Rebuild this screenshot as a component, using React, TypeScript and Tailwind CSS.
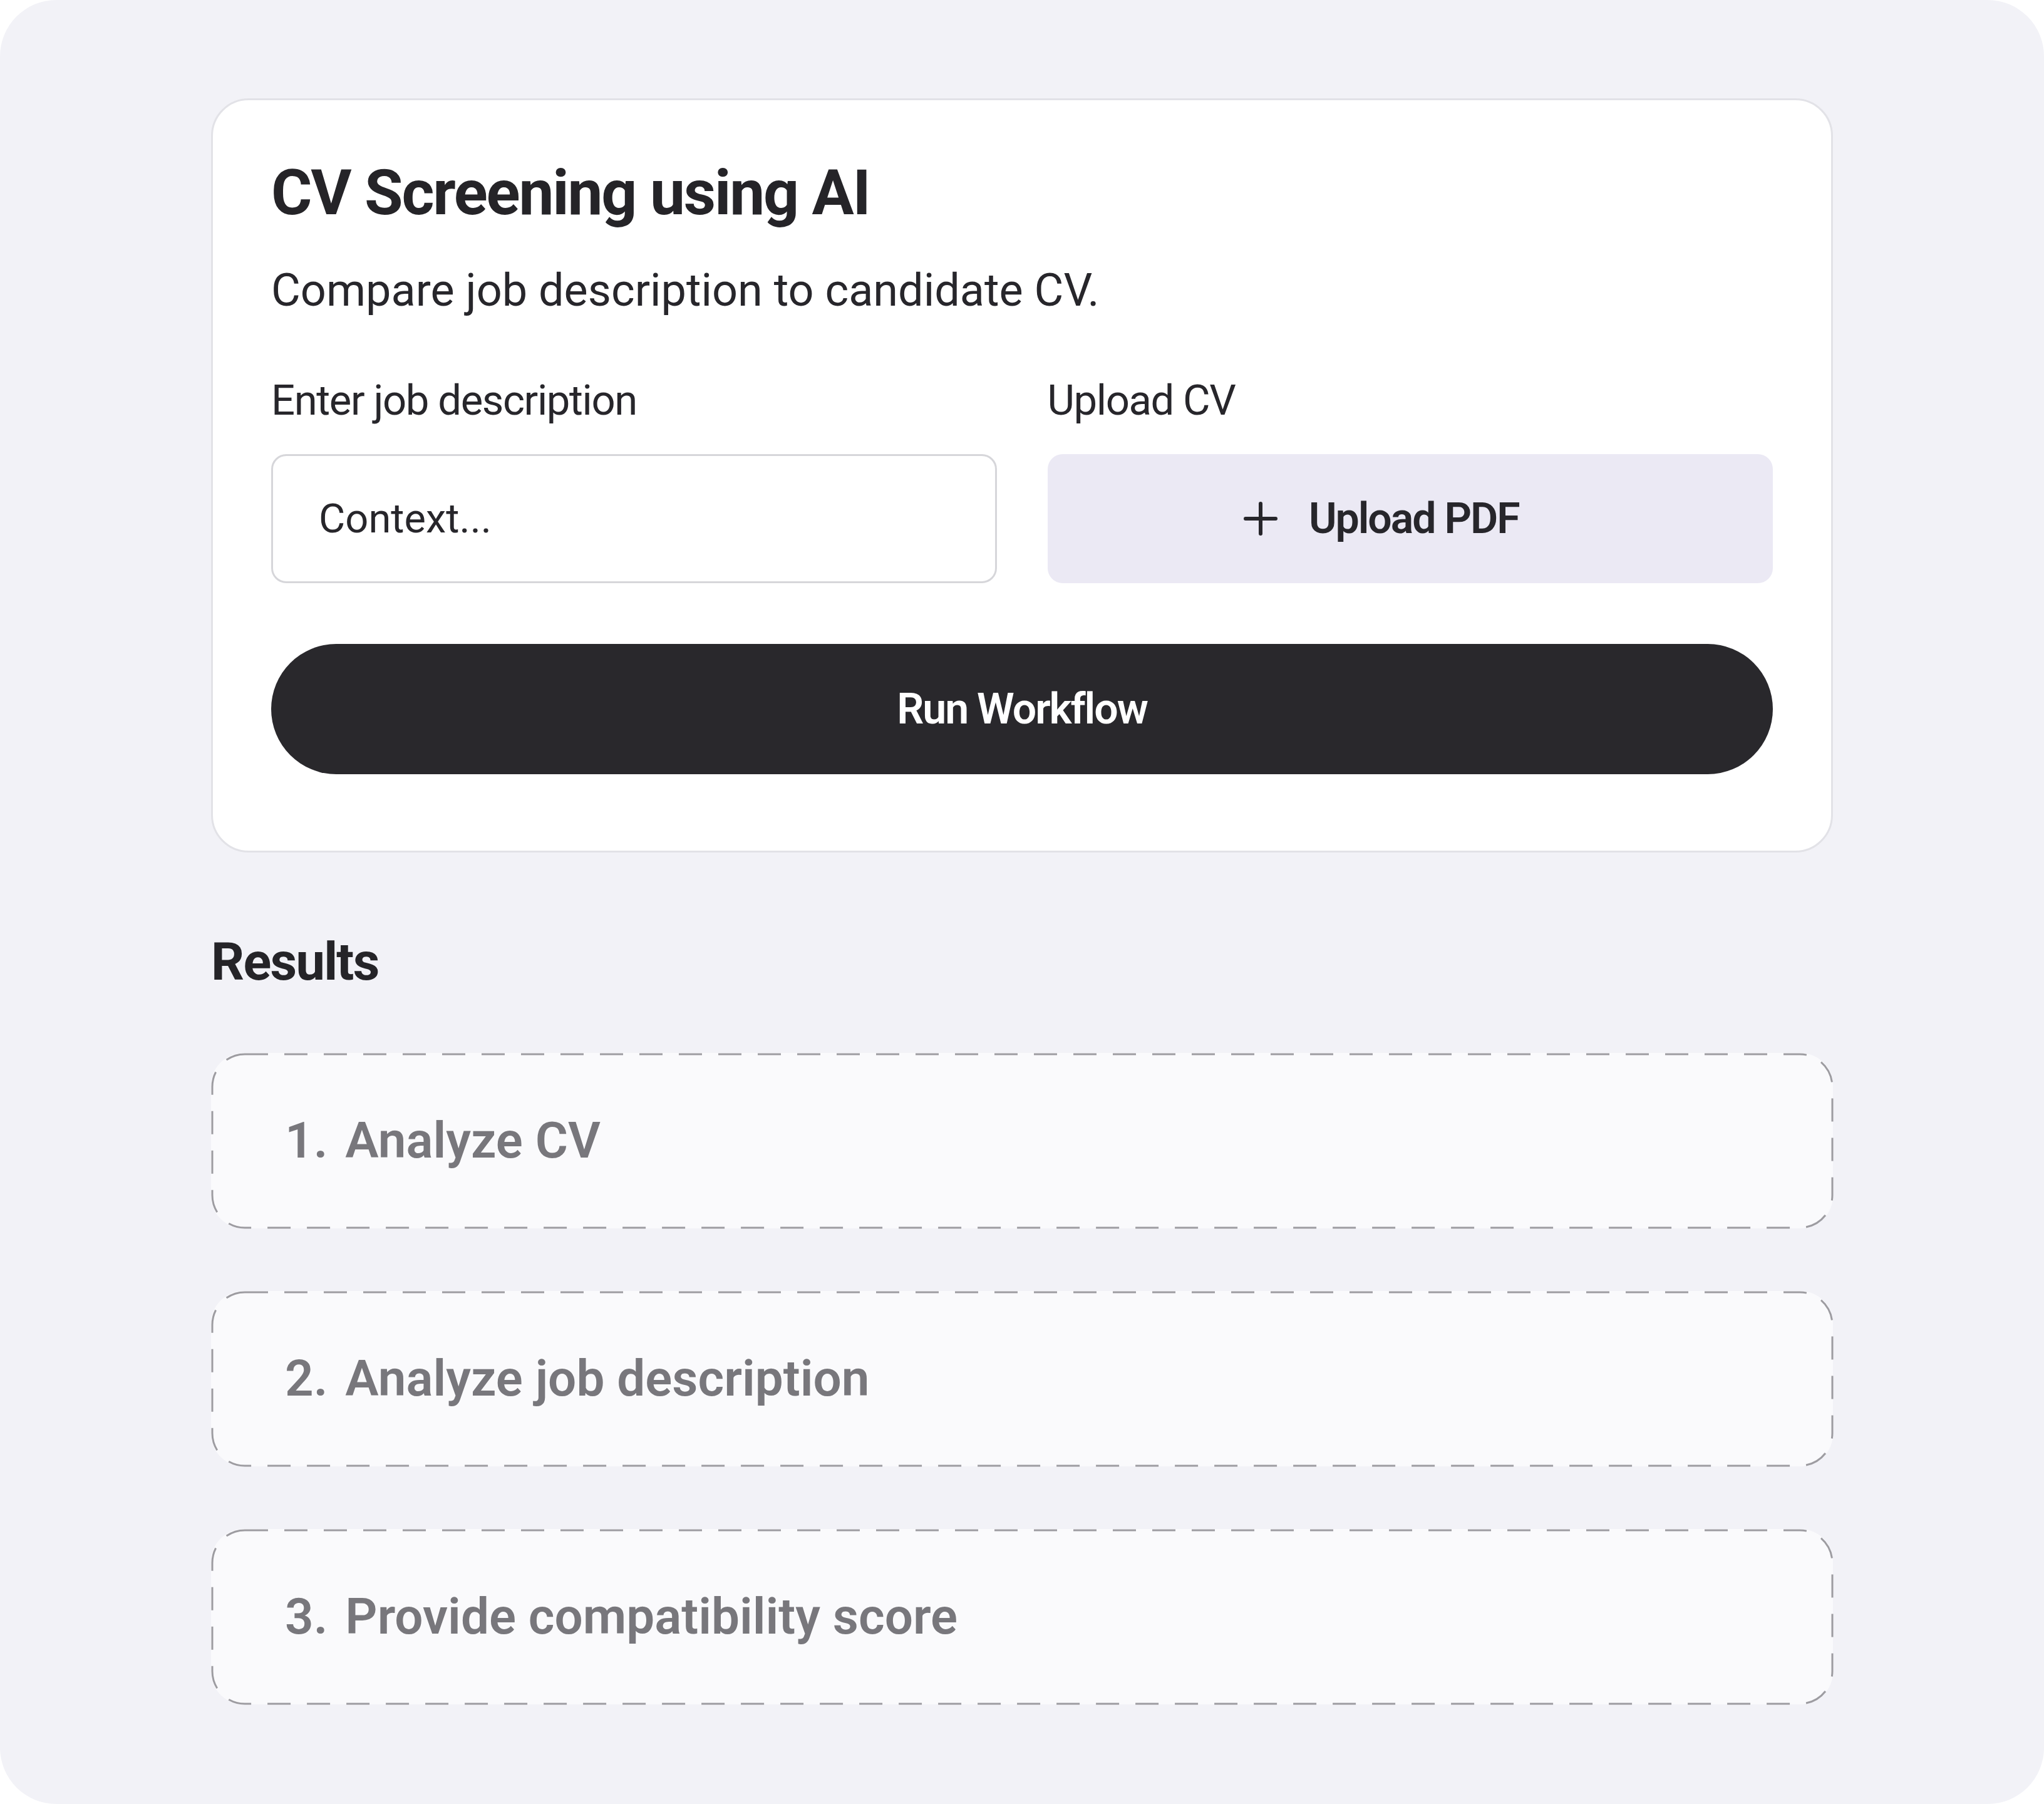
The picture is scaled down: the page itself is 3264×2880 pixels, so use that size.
import { useState } from "react";

const steps = ["Analyze CV", "Analyze job description", "Provide compatibility score"];

function PlusIcon() {
  return (
    <svg width="54" height="54" viewBox="0 0 54 54" fill="none">
      <path
        d="M3 27h48M27 3v48"
        stroke="#27262b"
        strokeWidth="6"
        strokeLinecap="round"
      />
    </svg>
  );
}

function StepCard({ index, label }: { index: number; label: string }) {
  return (
    <div className="relative flex h-[280px] items-center rounded-[52px] bg-[#fafafc] pl-[118px]">
      <svg className="pointer-events-none absolute inset-[1.5px] h-[calc(100%-3px)] w-[calc(100%-3px)] overflow-visible">
        <rect
          width="100%"
          height="100%"
          rx="52"
          fill="none"
          stroke="#9d9ca1"
          strokeWidth="3"
          strokeDasharray="37 26"
        />
      </svg>
      <span className="text-[80px] font-semibold leading-[96px] text-[#78777c]">
        <span className="mr-[8px]">{index}.</span> {label}
      </span>
    </div>
  );
}

export default function App() {
  const [context, setContext] = useState("");

  return (
    <div className="h-[2880px] w-[3264px] bg-white font-[Roboto,sans-serif] text-[#27262b]">
      <div className="flex h-full flex-col items-center rounded-[90px] bg-[#f2f2f7]">
        <div className="w-[2590px]">
          <div className="mt-[157px] rounded-[60px] border-[3px] border-[#e2e2e7] bg-white px-[93px] pb-[122px] pt-[88px]">
            <h1 className="text-[100px] font-bold leading-[120px] tracking-[-0.022em] text-[#252428]">
              CV Screening using AI
            </h1>
            <p className="mt-[53px] text-[72px] leading-[86px]">
              Compare job description to candidate CV.
            </p>

            <div className="mt-[92px] grid grid-cols-2 gap-x-[81px]">
              <div>
                <label
                  htmlFor="context"
                  className="block text-[67px] leading-[80px] tracking-[-0.021em]"
                >
                  Enter job description
                </label>
                <input
                  id="context"
                  type="text"
                  value={context}
                  onChange={(e) => setContext(e.target.value)}
                  placeholder="Context..."
                  className="mt-[46px] h-[206px] w-full rounded-[24px] border-[3px] border-[#d6d6da] bg-white px-[73px] text-[65px] outline-none placeholder:text-[#27262b]"
                />
              </div>
              <div>
                <span className="block text-[67px] leading-[80px] tracking-[-0.021em]">
                  Upload CV
                </span>
                <button className="mt-[46px] flex h-[206px] w-full items-center justify-center gap-[50px] rounded-[24px] bg-[#ebe9f4] pr-[92px] text-[68px] font-semibold tracking-[-0.03em]">
                  <PlusIcon />
                  Upload PDF
                </button>
              </div>
            </div>

            <button className="mt-[97px] flex h-[208px] w-full items-center justify-center rounded-full bg-[#29282c] text-[68px] font-semibold tracking-[-0.03em] text-white">
              Run Workflow
            </button>
          </div>

          <h2 className="mt-[125px] text-[83px] font-bold leading-[100px] tracking-[-0.021em] text-[#252428]">
            Results
          </h2>

          <div className="mt-[95px] flex flex-col gap-[100px]">
            {steps.map((s, i) => (
              <StepCard key={s} index={i + 1} label={s} />
            ))}
          </div>
        </div>
      </div>
    </div>
  );
}
